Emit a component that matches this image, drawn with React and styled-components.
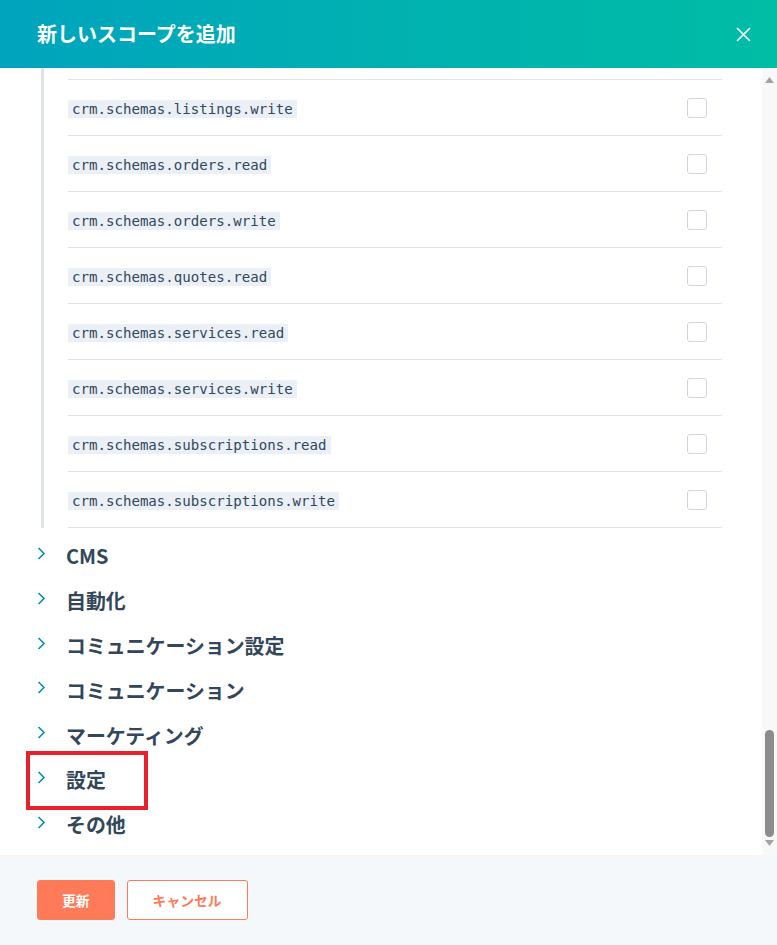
import React from 'react';
import styled, { createGlobalStyle } from 'styled-components';

const GlobalStyle = createGlobalStyle`
    html, body {
        margin: 0;
        padding: 0;
        background: #ffffff;
    }
    body {
        font-family: "Noto Sans CJK JP", "Noto Sans", sans-serif;
        color: #33475b;
    }
`;

const Panel = styled.div`
    width: 777px;
    height: 945px;
    display: flex;
    flex-direction: column;
    overflow: hidden;
`;

const Header = styled.header`
    height: 68px;
    flex: 0 0 68px;
    display: flex;
    align-items: center;
    justify-content: space-between;
    padding: 0 26px 0 37px;
    box-sizing: border-box;
    background: linear-gradient(90deg, #00a4bd 0%, #00bda5 100%);
`;

const Title = styled.h1`
    margin: 0;
    font-size: 20px;
    font-weight: 700;
    color: #ffffff;
    line-height: 1;
`;

const CloseButton = styled.button`
    width: 16px;
    height: 16px;
    padding: 0;
    border: none;
    background: none;
    display: flex;
    align-items: center;
    justify-content: center;
    cursor: pointer;
`;

const Body = styled.div`
    flex: 0 0 787px;
    display: flex;
    overflow: hidden;
`;

const Content = styled.div`
    flex: 1;
    overflow: hidden;
`;

const ScopeGroup = styled.div`
    margin-left: 41px;
    padding-top: 11px;
    border-left: 3px solid #dfe3eb;
    width: 678px;
`;

const ScopeRow = styled.div`
    margin-left: 24px;
    height: 55px;
    border-top: 1px solid #dfe3eb;
    display: flex;
    align-items: center;
    justify-content: space-between;
    padding-right: 15px;

    &:last-child {
        border-bottom: 1px solid #dfe3eb;
    }
`;

const ScopeCode = styled.code`
    font-family: "DejaVu Sans Mono", "Liberation Mono", monospace;
    font-size: 14.1px;
    line-height: 18px;
    padding: 0 4px;
    background: #eaf0f6;
    color: #33475b;
    margin-top: 2px;
`;

const Checkbox = styled.span`
    width: 18px;
    height: 18px;
    border: 1px solid #cbd6e2;
    border-radius: 3px;
    background: #ffffff;
`;

const SectionList = styled.div`
    padding: 6px 0 0 37px;
    display: flex;
    flex-direction: column;
`;

const SectionItem = styled.div`
    position: relative;
    height: 44.8px;
    display: flex;
    align-items: center;
`;

const Chevron = styled.span`
    width: 29px;
    display: flex;
    align-self: flex-start;
    margin-top: 13px;
`;

const SectionTitle = styled.span`
    font-size: 19.9px;
    font-weight: 700;
    color: #33475b;
    line-height: 1;
`;

const Highlight = styled.div`
    position: absolute;
    left: -11px;
    top: -7px;
    width: 114px;
    height: 51px;
    border: 4px solid #e8202a;
    pointer-events: none;
`;

const ScrollTrack = styled.div`
    flex: 0 0 15px;
    background: #f8f8f8;
    display: flex;
    flex-direction: column;
    align-items: center;
`;

const ScrollArrow = styled.div`
    height: 15px;
    flex: 0 0 15px;
    display: flex;
    align-items: ${p => (p.$down ? 'flex-start' : 'flex-end')};
    justify-content: center;
`;

const ScrollSpacer = styled.div`
    flex: 1;
`;

const ScrollThumb = styled.div`
    width: 9px;
    height: 107px;
    border-radius: 5px;
    background: #8c8c8c;
    margin-bottom: 3px;
`;

const Footer = styled.footer`
    flex: 1;
    background: #f5f8fa;
    display: flex;
    gap: 12px;
    padding: 25px 0 0 37px;
    box-sizing: border-box;
`;

const Button = styled.button`
    height: 40px;
    padding: 0 ${p => (p.$secondary ? '25px' : '24px')};
    border-radius: 3px;
    border: 1px solid #ff7a59;
    background: ${p => (p.$secondary ? '#ffffff' : '#ff7a59')};
    color: ${p => (p.$secondary ? '#ff7a59' : '#ffffff')};
    font-family: "Noto Sans CJK JP", sans-serif;
    font-size: 13.8px;
    font-weight: 700;
    cursor: pointer;
`;

const scopes = [
    'crm.schemas.listings.write',
    'crm.schemas.orders.read',
    'crm.schemas.orders.write',
    'crm.schemas.quotes.read',
    'crm.schemas.services.read',
    'crm.schemas.services.write',
    'crm.schemas.subscriptions.read',
    'crm.schemas.subscriptions.write',
];

const sections = [
    'CMS',
    '自動化',
    'コミュニケーション設定',
    'コミュニケーション',
    'マーケティング',
    '設定',
    'その他',
];

const ChevronIcon = () => (
    <svg width="9" height="13" viewBox="0 0 9 13">
        <path d="M1.5 1 L7 6.5 L1.5 12" fill="none" stroke="#0091ae" strokeWidth="1.6" />
    </svg>
);

const App = () => (
    <>
        <GlobalStyle />
        <Panel>
            <Header>
                <Title>新しいスコープを追加</Title>
                <CloseButton aria-label="閉じる">
                    <svg width="15" height="15" viewBox="0 0 15 15">
                        <path d="M1 1 L14 14 M14 1 L1 14" stroke="#ffffff" strokeWidth="1.6" />
                    </svg>
                </CloseButton>
            </Header>

            <Body>
                <Content>
                    <ScopeGroup>
                        {scopes.map(scope => (
                            <ScopeRow key={scope}>
                                <ScopeCode>{scope}</ScopeCode>
                                <Checkbox />
                            </ScopeRow>
                        ))}
                    </ScopeGroup>

                    <SectionList>
                        {sections.map(name => (
                            <SectionItem key={name}>
                                <Chevron><ChevronIcon /></Chevron>
                                <SectionTitle>{name}</SectionTitle>
                                {name === '設定' && <Highlight />}
                            </SectionItem>
                        ))}
                    </SectionList>
                </Content>

                <ScrollTrack>
                    <ScrollArrow>
                        <svg width="9" height="6" viewBox="0 0 9 6">
                            <path d="M4.5 0 L9 6 L0 6 Z" fill="#a3a3a3" />
                        </svg>
                    </ScrollArrow>
                    <ScrollSpacer />
                    <ScrollThumb />
                    <ScrollArrow $down>
                        <svg width="9" height="6" viewBox="0 0 9 6">
                            <path d="M0 0 L9 0 L4.5 6 Z" fill="#a3a3a3" />
                        </svg>
                    </ScrollArrow>
                </ScrollTrack>
            </Body>

            <Footer>
                <div><Button>更新</Button></div>
                <div><Button $secondary>キャンセル</Button></div>
            </Footer>
        </Panel>
    </>
);

export default App;
